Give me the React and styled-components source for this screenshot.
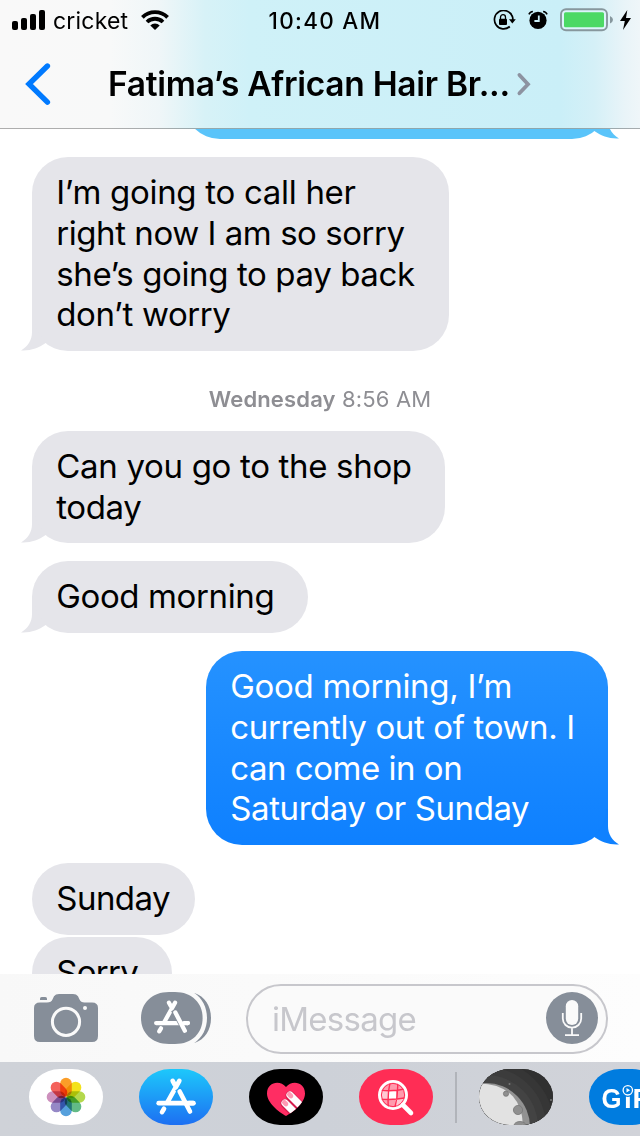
import React from "react";
import styled, { createGlobalStyle } from "styled-components";

const GlobalStyle = createGlobalStyle`
  * {
    box-sizing: border-box;
  }
  body {
    margin: 0;
    background: #fff;
    font-family: Inter, "Liberation Sans", sans-serif;
  }
  svg {
    display: block;
    flex: none;
  }
`;

const Phone = styled.div`
  width: 640px;
  height: 1136px;
  display: flex;
  flex-direction: column;
  overflow: hidden;
  background: #fff;
`;

const Header = styled.header`
  height: 129px;
  flex: none;
  border-bottom: 1px solid rgba(0, 0, 0, 0.3);
  background: linear-gradient(
    90deg,
    #f9f9f9 0,
    #f8f9f9 110px,
    #eff6f8 160px,
    #d7f2f7 205px,
    #cff1f8 250px,
    #caeff8 560px,
    #d5f0f7 595px,
    #e9f4f8 625px,
    #eff6f9 640px
  );
`;

const StatusBar = styled.div`
  height: 40px;
  display: flex;
  align-items: center;
  padding: 0 9px 0 12px;
`;

const StatusSide = styled.div`
  flex: 1;
  display: flex;
  align-items: center;
  justify-content: ${({ $end }) => ($end ? "flex-end" : "flex-start")};
`;

const Carrier = styled.span`
  width: 76px;
  margin: 1px 12px 0 8px;
  font-size: 23px;
  letter-spacing: 0.2px;
  white-space: nowrap;
`;

const Clock = styled.span`
  width: 116px;
  margin-left: 7px;
  font-size: 22.5px;
  font-weight: 500;
  letter-spacing: 1.3px;
  text-align: center;
  white-space: nowrap;
`;

const NavBar = styled.div`
  height: 88px;
  display: flex;
  align-items: center;
  padding-left: 24px;
`;

const Title = styled.h1`
  width: 402px;
  margin: 0 6px 0 56px;
  font-size: 33.5px;
  line-height: 44px;
  font-weight: 600;
  letter-spacing: -0.28px;
  white-space: nowrap;
`;

const Thread = styled.main`
  flex: 1;
  min-height: 0;
  display: flex;
  flex-direction: column;
  align-items: flex-start;
  padding: 0 32px;
  overflow: hidden;
`;

const BubbleBox = styled.div`
  position: relative;
  flex: none;
  width: ${({ $width }) => $width}px;
  height: ${({ $rows }) => Math.round(31 + $rows * 40.7)}px;
  margin-top: ${({ $gap }) => $gap}px;
  padding: 15.2px 0 0 24.3px;
  border-radius: 36px;
  align-self: ${({ $mine }) => ($mine ? "flex-end" : "flex-start")};
  color: ${({ $mine }) => ($mine ? "#fff" : "#000")};
  background: ${({ $fill }) => $fill || "#e5e5ea"};
`;

const Line = styled.div`
  height: 40.7px;
  font-size: 33px;
  line-height: 40.7px;
  letter-spacing: ${({ $track }) => $track || 0}px;
  white-space: nowrap;
`;

const Tail = styled.svg`
  position: absolute;
  bottom: 0;
  ${({ $mine }) =>
    $mine ? "right: -12px; transform: scaleX(-1);" : "left: -12px;"}
`;

const Stamp = styled.div`
  align-self: center;
  flex: none;
  height: 30px;
  margin-top: 33px;
  font-size: 22px;
  line-height: 30px;
  letter-spacing: 0.15px;
  color: #8e8e93;
  white-space: nowrap;
  b {
    font-weight: 600;
  }
`;

const Compose = styled.div`
  flex: none;
  height: 88px;
  display: flex;
  align-items: center;
  padding: 0 32px 0 34px;
  background: linear-gradient(90deg, #f8f8f8, #fdfdfd);
`;

const Field = styled.div`
  width: 362px;
  height: 70px;
  margin: 2px 0 0 34px;
  display: flex;
  align-items: center;
  justify-content: space-between;
  padding: 0 8px 2px 24px;
  border: 2px solid #c7c7cc;
  border-radius: 35px;
  background: #fafafa;
`;

const Placeholder = styled.span`
  padding-top: 2px;
  font-size: 33px;
  letter-spacing: -0.75px;
  color: #c7c7cc;
`;

const Strip = styled.nav`
  flex: none;
  height: 74px;
  display: flex;
  align-items: flex-start;
  padding: 6.5px 0 0 29px;
  background: linear-gradient(90deg, #cfd2d8, #cdd1d8 50%, #d1d3d9);
`;

const AppPill = styled.div`
  flex: none;
  width: 74px;
  height: 56px;
  margin-right: 36px;
  border-radius: 31px / 28px;
  overflow: hidden;
  background: ${({ $fill }) => $fill};
`;

const Divider = styled.div`
  flex: none;
  width: 2px;
  height: 51px;
  margin: 3px 22px 0 -14px;
  background: #b1b4ba;
`;

const Gap = styled.span`
  flex: none;
  width: ${({ $w }) => $w}px;
`;

const GREY = "#868e99";

const Bubble = ({ lines, width, gap, mine, tail, fill, tailFill }) => (
  <BubbleBox
    $width={width}
    $gap={gap}
    $mine={mine}
    $fill={fill}
    $rows={lines.length || 1}
  >
    {lines.map(([text, track]) => (
      <Line key={text} $track={track}>
        {text}
      </Line>
    ))}
    {tail && (
      <Tail $mine={mine} width="48" height="36" viewBox="0 0 48 36">
        <path
          d="M12 0V17C12 25 8 31.5 1 35.4C10.5 36 18.5 33 25.3 28.3L26.5 27A34 34 0 0 1 14 0Z"
          fill={tailFill || "#e5e5ea"}
        />
      </Tail>
    )}
  </BubbleBox>
);

const SignalIcon = () => (
  <svg width="33" height="20" viewBox="0 0 33 20">
    <rect x="0" y="11" width="6" height="9" rx="2" />
    <rect x="9" y="8" width="6" height="12" rx="2" />
    <rect x="18" y="4" width="6" height="16" rx="2" />
    <rect x="27" y="0" width="6" height="20" rx="2" />
  </svg>
);

const WifiIcon = () => (
  <svg width="28" height="20" viewBox="0 0 28 20">
    <g fill="none" stroke="#000" strokeWidth="3.8">
      <path d="M1.4 7.3A18 18 0 0 1 26.6 7.3" />
      <path d="M6 12A11.5 11.5 0 0 1 22 12" />
    </g>
    <path d="M14 20L9.3 15.4A6.7 6.7 0 0 1 18.7 15.4Z" />
  </svg>
);

const LockIcon = () => (
  <svg width="23" height="20" viewBox="0 0 23 20">
    <path
      d="M19.2 6.2A9.2 9.2 0 1 0 16.8 16.5"
      fill="none"
      stroke="#000"
      strokeWidth="1.7"
    />
    <path d="M16 9.3H22.8L19.3 13.6Z" />
    <path d="M19.2 5.8Q20 8 19.8 10" fill="none" stroke="#000" strokeWidth="1.7" />
    <rect x="6" y="8.8" width="8" height="6.2" rx="1" />
    <path
      d="M7.5 9V7.2A2.5 2.6 0 0 1 12.5 7.2V9"
      fill="none"
      stroke="#000"
      strokeWidth="1.3"
    />
  </svg>
);

const AlarmIcon = () => (
  <svg width="20" height="20" viewBox="0 0 20 20">
    <circle cx="10" cy="10.4" r="8.6" />
    <path
      d="M.9 4.4Q2 1.7 4.9 1.5M19.1 4.4Q18 1.7 15.1 1.5"
      fill="none"
      stroke="#000"
      strokeWidth="1.5"
    />
    <path d="M10.8 5.4V11H6.4" fill="none" stroke="#cbeff8" strokeWidth="1.8" />
  </svg>
);

const BatteryIcon = () => (
  <svg width="54" height="24" viewBox="0 0 54 24">
    <rect
      x="1"
      y="1.2"
      width="46"
      height="21"
      rx="5"
      fill="#dcf4fa"
      stroke="#87979d"
      strokeWidth="1.9"
    />
    <rect x="4" y="4.2" width="40" height="15" rx="1.5" fill="#4cd964" />
    <path d="M50 8Q53 9.4 53 11.8T50 15.6Z" fill="#87979d" />
  </svg>
);

const BoltIcon = () => (
  <svg width="11" height="20" viewBox="0 0 11 20">
    <path d="M7.3 0L0 11H4.8L3 20L11 8H6Z" />
  </svg>
);

const BackIcon = () => (
  <svg width="28" height="44" viewBox="0 0 28 44">
    <path
      d="M23.4 4L5 22L23.4 40.2"
      fill="none"
      stroke="#007aff"
      strokeWidth="5.4"
      strokeLinecap="round"
      strokeLinejoin="miter"
    />
  </svg>
);

const ForwardIcon = () => (
  <svg width="16" height="24" viewBox="0 0 16 24">
    <path
      d="M3.4 3L12 12.2L3.4 21.3"
      fill="none"
      stroke="#8d93a1"
      strokeWidth="3.8"
      strokeLinecap="round"
    />
  </svg>
);

const CameraIcon = () => (
  <svg width="64" height="52" viewBox="0 0 64 52">
    <path
      fill={GREY}
      d="M6 10.5H13C16 10.5 17.6 9.6 18.6 7.2L20 4.2Q21.6 2 25 2H39Q42.4 2 44 4.2L45.4 7.2C46.4 9.6 48 10.5 50.5 10.5H58Q64 10.5 64 16V44Q64 50 58 50H6Q0 50 0 44V16Q0 10.5 6 10.5Z"
    />
    <path d="M6 8V6.6Q6 5 7.6 5H11.4Q13 5 13 6.6V8Z" fill={GREY} />
    <circle cx="32" cy="29.8" r="13.6" fill="none" stroke="#fafafa" strokeWidth="3" />
    <circle cx="51" cy="16" r="2" fill="#fafafa" />
  </svg>
);

const StoreGlyph = ({ gapColor, splitBar }) => (
  <g fill="none" stroke="#fff" strokeWidth="14" strokeLinecap="round">
    <path d="M10 -47L-26 18" />
    <path d="M-36 37L-42 47" />
    {!splitBar && (
      <path d="M7 -24L26 12" stroke={gapColor} strokeWidth="21" strokeLinecap="butt" />
    )}
    <path d="M-52 20H52" />
    {splitBar && (
      <path d="M7 -24L44 44" stroke={gapColor} strokeWidth="22" strokeLinecap="butt" />
    )}
    <path d="M39 20H52" />
    <path d="M-10 -47L-4 -36M11 -15L42 45" />
  </g>
);

const AppsButton = () => (
  <svg width="71" height="54" viewBox="0 0 71 54">
    <path
      fill={GREY}
      d="M28 1H34C51 1 61.6 12 61.6 27S51 53 34 53H28C11 53 0 42 0 27S11 1 28 1Z"
    />
    <path
      fill={GREY}
      d="M53 1.8C64 5.5 70 15 70 27S64 48.5 53 52.2C61.5 46.5 66 37.5 66 27S61.5 7.5 53 1.8Z"
    />
    <g transform="translate(31 26) scale(.305)">
      <StoreGlyph gapColor={GREY} splitBar />
    </g>
  </svg>
);

const MicIcon = () => (
  <svg width="52" height="52" viewBox="0 0 52 52">
    <circle cx="26" cy="26" r="26" fill={GREY} />
    <rect x="19.8" y="8" width="12.4" height="25" rx="6.2" fill="#fafafa" />
    <path
      d="M16.8 21V26.5A9.2 9.2 0 0 0 35.2 26.5V21M26 36V43.2M19 43.2H33"
      fill="none"
      stroke="#fafafa"
      strokeWidth="1.8"
    />
  </svg>
);

const PETALS = [
  "#fb9d28",
  "#f3e21c",
  "#b4d84c",
  "#62ba86",
  "#56a0dc",
  "#9588c6",
  "#cd90bd",
  "#f4625c",
];

const Petal = styled.rect`
  mix-blend-mode: multiply;
`;

const PhotosIcon = () => (
  <svg width="74" height="56" viewBox="0 0 74 56">
    {PETALS.map((color, i) => (
      <Petal
        key={color}
        x="31.2"
        y="8.7"
        width="11.6"
        height="18.8"
        rx="5.8"
        fill={color}
        transform={`rotate(${i * 45} 37 28)`}
      />
    ))}
  </svg>
);

const StoreIcon = () => (
  <svg width="74" height="56" viewBox="0 0 74 56">
    <g transform="translate(37 27.5) scale(.333)">
      <StoreGlyph gapColor="#1da0f8" />
    </g>
  </svg>
);

const HeartIcon = () => (
  <svg width="74" height="56" viewBox="0 0 74 56">
    <defs>
      <clipPath id="heart">
        <path d="M37 47C30 43 18 34 18 24.5C18 13 31 10.5 37 18C43 10.5 56 13 56 24.5C56 34 44 43 37 47Z" />
      </clipPath>
    </defs>
    <g clipPath="url(#heart)">
      <rect width="74" height="56" fill="#ff2d63" />
      <g strokeLinecap="round" fill="none">
        <path d="M41 26.5L57 42.5M36 34.5L50 48.5" stroke="#d01d4c" strokeWidth="9" />
        <path d="M41 26L57 42M36 34L50 48" stroke="#fff" strokeWidth="7.2" />
        <path d="M40.3 25.3L42 27M35.3 33.3L37 35" stroke="#ff9ab4" strokeWidth="4.6" />
      </g>
    </g>
  </svg>
);

const SearchIcon = () => (
  <svg width="74" height="56" viewBox="0 0 74 56">
    <defs>
      <clipPath id="lens">
        <circle cx="34" cy="26" r="12.8" />
      </clipPath>
    </defs>
    <g clipPath="url(#lens)">
      <rect width="74" height="56" fill="#ff9bad" />
      <path d="M20 21.5H29.5V30H20ZM36 30H50V40H36Z" fill="#ffc9d3" />
      <path d="M30 21.5H37V30H30Z" fill="#fff" />
      <path
        d="M20 21Q34 23 48 19.5M20 30Q34 31.5 48 28.5M31.5 11.5Q28 25.500 29.5 40M38.5 11.5Q39.5 26.5 35.5 40"
        fill="none"
        stroke="#ff2d55"
        strokeWidth="1.4"
      />
      <circle cx="34" cy="26" r="11.6" fill="none" stroke="#ff2d55" strokeWidth="1" />
    </g>
    <circle cx="34" cy="26" r="13.6" fill="none" stroke="#fff" strokeWidth="2.8" />
    <path d="M44 36L52 44" stroke="#fff" strokeWidth="4.6" strokeLinecap="round" />
  </svg>
);

const MoonIcon = () => (
  <svg width="74" height="56" viewBox="0 0 74 56">
    <rect width="74" height="56" fill="#303030" />
    <circle cx="7" cy="58" r="68" fill="#363636" />
    <circle cx="7" cy="58" r="60" fill="#3c3c3c" />
    <circle cx="7" cy="58" r="52" fill="#434343" />
    <circle cx="7" cy="58" r="44" fill="#929292" />
    <path d="M0 14.5Q22 14.5 34 27.5Q43 37.5 44 56H0Z" fill="#e2e2e2" />
    <g fill="#8f8f8f" stroke="#777" strokeWidth=".8">
      <circle cx="27" cy="24.7" r="2.6" />
      <circle cx="39" cy="41" r="4.6" />
      <ellipse cx="41" cy="56.5" rx="6" ry="4" />
    </g>
    <circle cx="30.5" cy="15" r="1" fill="#777" />
    <circle cx="72" cy="31" r="1" fill="#777" />
  </svg>
);

const GifText = styled.text`
  font-family: "Liberation Sans", Arial, sans-serif;
  font-size: 28px;
  font-weight: 700;
  fill: #fff;
`;

const GifIcon = () => (
  <svg width="74" height="56" viewBox="0 0 74 56">
    <GifText x="12.5" y="38.5" textLength="20" lengthAdjust="spacingAndGlyphs">
      G
    </GifText>
    <GifText x="35" y="38.5">
      i
    </GifText>
    <GifText x="43.5" y="38.5">
      F
    </GifText>
    <circle cx="38.8" cy="21.5" r="6.4" fill="#007cdf" />
    <circle cx="38.8" cy="21.3" r="4.7" fill="none" stroke="#fff" strokeWidth="1.3" />
    <path d="M37.5 19.1L41.1 21.3L37.5 23.5Z" fill="#fff" />
  </svg>
);

const App = () => {
  return (
    <Phone>
      <GlobalStyle />
      <Header>
        <StatusBar>
          <StatusSide>
            <SignalIcon />
            <Carrier>cricket</Carrier>
            <WifiIcon />
          </StatusSide>
          <Clock>10:40 AM</Clock>
          <StatusSide $end>
            <LockIcon />
            <Gap $w={12} />
            <AlarmIcon />
            <Gap $w={12} />
            <BatteryIcon />
            <Gap $w={6} />
            <BoltIcon />
          </StatusSide>
        </StatusBar>
        <NavBar>
          <BackIcon />
          <Title>Fatima’s African Hair Br...</Title>
          <ForwardIcon />
        </NavBar>
      </Header>
      <Thread>
        <Bubble
          lines={[]}
          width={424}
          gap={-62}
          mine
          tail
          fill="#5ac4fa"
          tailFill="#5ac4fa"
        />
        <Bubble
          lines={[
            ["I’m going to call her", -0.3],
            ["right now I am so sorry", -0.45],
            ["she’s going to pay back", -0.38],
            ["don’t worry", -0.4],
          ]}
          width={417}
          gap={18}
          tail
        />
        <Stamp>
          <b>Wednesday</b> 8:56 AM
        </Stamp>
        <Bubble
          lines={[
            ["Can you go to the shop", -0.32],
            ["today", -0.4],
          ]}
          width={413}
          gap={17}
          tail
        />
        <Bubble lines={[["Good morning", -0.38]]} width={276} gap={18} tail />
        <Bubble
          lines={[
            ["Good morning, I’m", -0.3],
            ["currently out of town. I", -0.36],
            ["can come in on", -0.48],
            ["Saturday or Sunday", -0.42],
          ]}
          width={402}
          gap={18}
          mine
          tail
          fill="linear-gradient(#2592ff, #0e80ff)"
          tailFill="#0f81ff"
        />
        <Bubble lines={[["Sunday", -0.55]]} width={163} gap={18} />
        <Bubble lines={[["Sorry", -0.7]]} width={140} gap={2} />
      </Thread>
      <Compose>
        <CameraIcon />
        <Gap $w={43} />
        <AppsButton />
        <Field>
          <Placeholder>iMessage</Placeholder>
          <MicIcon />
        </Field>
      </Compose>
      <Strip>
        <AppPill $fill="#fff">
          <PhotosIcon />
        </AppPill>
        <AppPill $fill="linear-gradient(#1dc8fb, #1d6ff2)">
          <StoreIcon />
        </AppPill>
        <AppPill $fill="#000">
          <HeartIcon />
        </AppPill>
        <AppPill $fill="#ff2d55">
          <SearchIcon />
        </AppPill>
        <Divider />
        <AppPill $fill="#303030">
          <MoonIcon />
        </AppPill>
        <AppPill $fill="#007cdf">
          <GifIcon />
        </AppPill>
      </Strip>
    </Phone>
  );
};

export default App;
